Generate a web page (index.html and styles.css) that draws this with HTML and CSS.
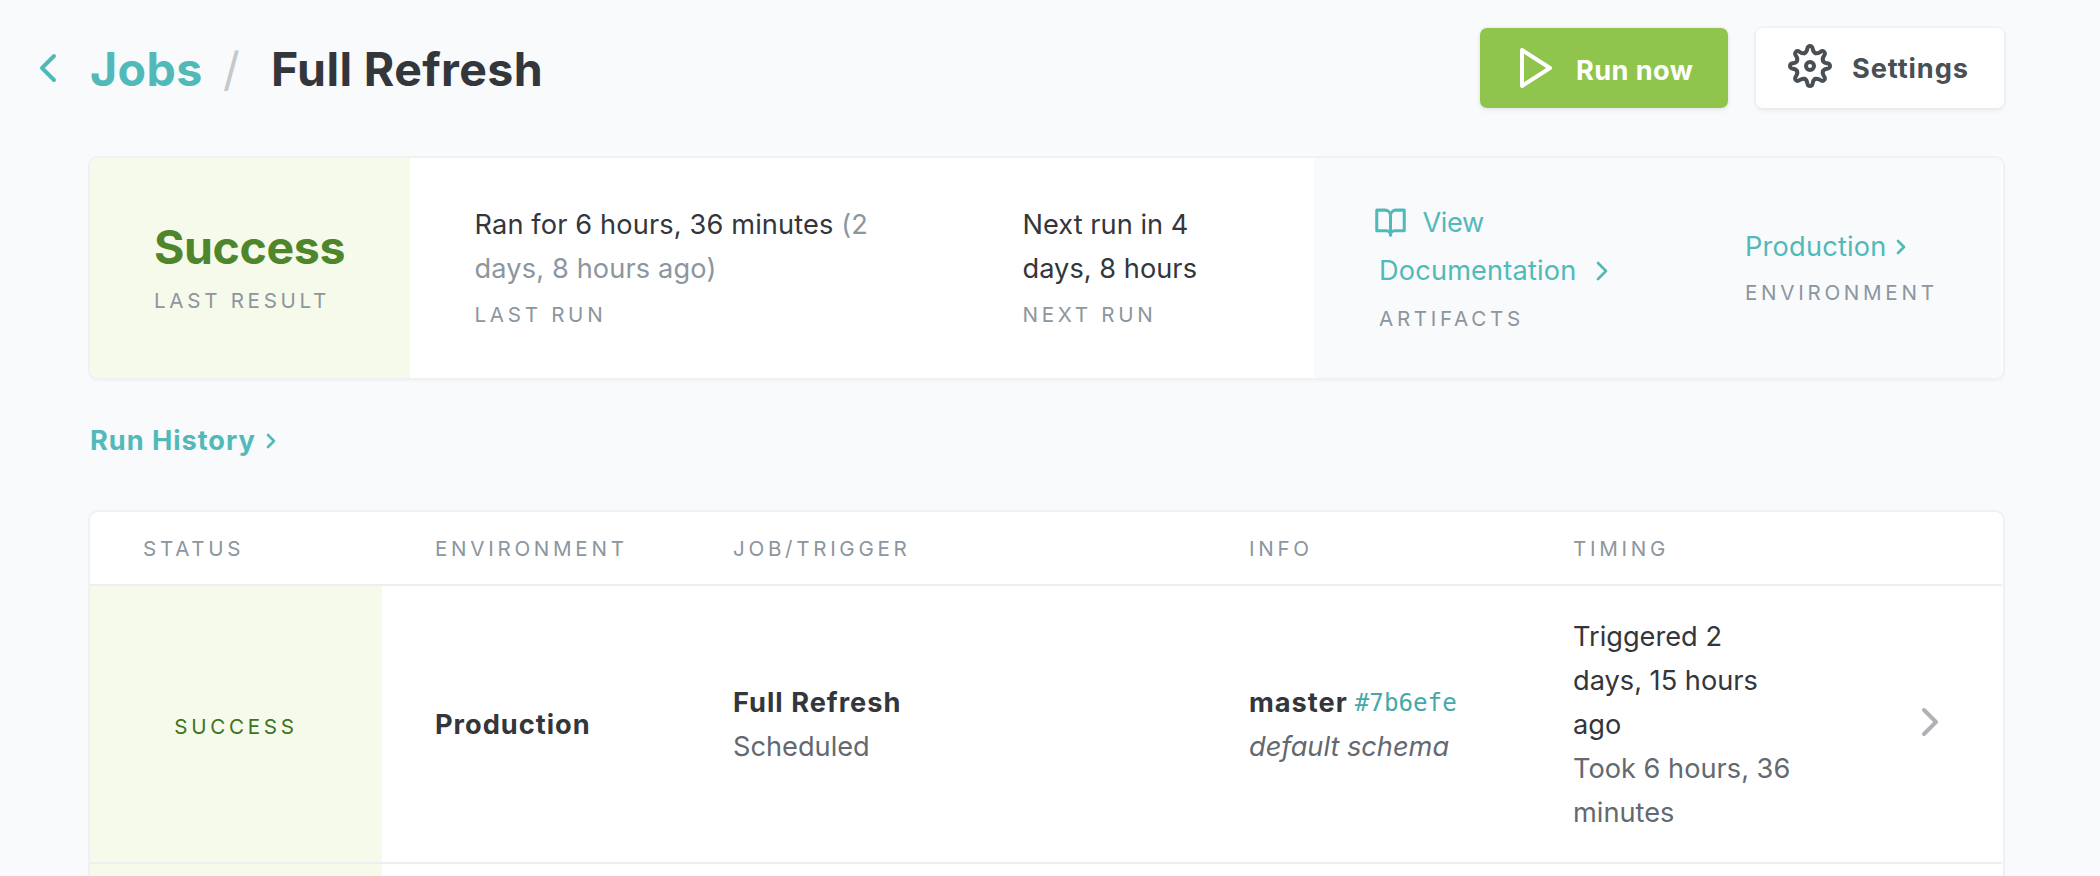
FILE: index.html
```html
<!DOCTYPE html>
<html lang="en">
<head>
<meta charset="utf-8">
<title>Full Refresh</title>
<link rel="stylesheet" href="styles.css">
</head>
<body>
<svg class="defs" width="0" height="0">
  <symbol id="chevron-right" viewBox="0 0 24 24"><polyline points="9 18 15 12 9 6"/></symbol>
  <symbol id="chevron-left" viewBox="0 0 24 24"><polyline points="15 18 9 12 15 6"/></symbol>
  <path id="tooth" d="M-5.36-12.93C-1.2-14.65-4.2-20 0-20S1.2-14.65 5.36-12.93"/>
</svg>

<header class="topbar">
  <a class="back"><svg class="icon icon-lg"><use href="#chevron-left"/></svg></a>
  <h1 class="crumbs"><a class="crumb-link">Jobs</a><span class="slash">/</span><span class="crumb-current">Full Refresh</span></h1>
  <div class="actions">
    <button class="btn btn-run">
      <svg class="icon icon-lg" viewBox="0 0 24 24"><polygon points="5 3 19 12 5 21 5 3"/></svg>
      <span class="run-text">Run now</span>
    </button>
    <button class="btn btn-settings">
      <svg class="icon gear" viewBox="-22 -22 44 44">
        <circle r="4"/>
        <use href="#tooth"/><use href="#tooth" transform="rotate(45)"/><use href="#tooth" transform="rotate(90)"/><use href="#tooth" transform="rotate(135)"/>
        <use href="#tooth" transform="rotate(180)"/><use href="#tooth" transform="rotate(225)"/><use href="#tooth" transform="rotate(270)"/><use href="#tooth" transform="rotate(315)"/>
      </svg>
      <span class="settings-text">Settings</span>
    </button>
  </div>
</header>

<main class="content">
  <section class="card summary">
    <div class="cell cell-result">
      <div class="result">Success</div>
      <div class="label">Last result</div>
    </div>
    <div class="cell cell-last">
      <div class="value">Ran for 6 hours, 36 minutes <span class="muted">(2<br>days, 8 hours ago)</span></div>
      <div class="label">Last run</div>
    </div>
    <div class="cell cell-next">
      <div class="value">Next run in 4<br>days, 8 hours</div>
      <div class="label">Next run</div>
    </div>
    <div class="cell cell-artifacts">
      <a class="doc-line doc-first"><svg class="icon book" viewBox="0 0 24 24"><path d="M2 3h6a4 4 0 0 1 4 4v14a3 3 0 0 0-3-3H2z"/><path d="M22 3h-6a4 4 0 0 0-4 4v14a3 3 0 0 1 3-3h7z"/></svg><span class="view">View</span></a>
      <a class="doc-line"><span class="doc">Documentation</span><svg class="icon icon-md"><use href="#chevron-right"/></svg></a>
      <div class="label">Artifacts</div>
    </div>
    <div class="cell cell-env">
      <a class="env-line"><span class="env">Production</span><svg class="icon icon-sm"><use href="#chevron-right"/></svg></a>
      <div class="label">Environment</div>
    </div>
  </section>

  <h2 class="history"><a class="history-link"><span>Run History</span><svg class="icon icon-sm"><use href="#chevron-right"/></svg></a></h2>

  <section class="card runs">
    <div class="row head">
      <div class="td label">Status</div>
      <div class="td label">Environment</div>
      <div class="td label">Job/Trigger</div>
      <div class="td label">Info</div>
      <div class="td label">Timing</div>
    </div>
    <div class="row run">
      <div class="status label">Success</div>
      <div class="td strong">Production</div>
      <div class="td"><div class="strong">Full Refresh</div><div class="sub">Scheduled</div></div>
      <div class="td"><div class="info-line"><span class="strong">master</span> <a class="hash">#7b6efe</a></div><div class="sub schema">default schema</div></div>
      <div class="td"><div>Triggered 2<br>days, 15 hours<br>ago</div><div class="sub">Took 6 hours, 36<br>minutes</div></div>
      <div class="open"><svg class="icon icon-lg"><use href="#chevron-right"/></svg></div>
    </div>
    <div class="row next-run"><div class="status"></div></div>
  </section>
</main>
</body>
</html>
```
FILE: styles.css
```css
* { box-sizing: border-box; }

body {
  margin: 0;
  height: 876px;
  overflow: hidden;
  background: #f9fafc;
  color: #33363b;
  font: 400 27.2px/44px Inter, sans-serif;
}

.defs { position: absolute; }

.icon {
  display: block;
  flex: none;
  overflow: visible;
  fill: none;
  stroke: currentColor;
  stroke-width: 2;
  stroke-linecap: round;
  stroke-linejoin: round;
}
.icon-lg { width: 48px; height: 48px; }
.icon-md { width: 32px; height: 32px; }
.icon-sm { width: 24px; height: 24px; stroke-width: 2.6; }

.label {
  color: #8c969e;
  font-size: 20.6px;
  letter-spacing: 3.7px;
  text-transform: uppercase;
  white-space: nowrap;
}

/* Top bar */
.topbar {
  display: flex;
  align-items: center;
  height: 136px;
  padding: 0 96px 0 24px;
}
.back { color: #52b9b9; }
.crumbs {
  display: flex;
  align-items: center;
  margin: 2px 0 0 18px;
  font-size: 46.5px;
  font-weight: 700;
  line-height: 56px;
}
.crumb-link { width: 133px; color: #52b9b9; letter-spacing: .4px; }
.slash { width: 48px; color: #c4c9cd; font-weight: 400; }
.crumb-current { letter-spacing: .38px; }
.actions { display: flex; gap: 28px; margin-left: auto; }
.btn {
  display: flex;
  align-items: center;
  width: 248px;
  height: 80px;
  border: 0;
  border-radius: 7px;
  box-shadow: 0 0 0 2px rgba(0, 0, 0, .025), 0 3px 6px rgba(0, 0, 0, .05);
  font: 700 27.2px/44px Inter, sans-serif;
}
.btn-run { padding: 0 0 0 32px; background: #8fc54c; color: #fff; }
.run-text { margin: 5px 0 0 16px; letter-spacing: .4px; }
.btn-settings { padding: 0 0 0 32px; background: #fff; color: #484f55; }
.gear { width: 44px; height: 44px; margin-top: -4px; stroke-width: 4; }
.settings-text { margin: 1px 0 0 20px; letter-spacing: .9px; }

/* Cards */
.content { width: 1913px; margin: 22px 0 0 90px; }
.card {
  border-radius: 8px;
  background: #fff;
  box-shadow: 0 0 0 2px #f0f1f4, 0 2px 4px rgba(0, 0, 0, .06);
  overflow: hidden;
}
.summary { display: flex; height: 220px; }
.cell { flex: none; }
.cell-result { width: 320px; padding: 61px 0 0 64px; background: #f6faeb; }
.result {
  margin-bottom: 4px;
  color: #4f862c;
  font-size: 46.5px;
  font-weight: 700;
  letter-spacing: -.4px;
  line-height: 56px;
}
.cell-last { width: 548px; padding: 45px 0 0 64.5px; }
.cell-last .value { margin-bottom: 2px; letter-spacing: .13px; white-space: nowrap; }
.muted { color: #8c969e; }
.cell-next { width: 356px; padding: 45px 0 0 64.5px; }
.cell-next .value { margin-bottom: 2px; letter-spacing: .03px; }
.cell-artifacts { width: 366px; padding: 41px 0 0 65px; background: #f9fafc; }
.doc-line { display: flex; align-items: center; height: 48px; color: #52b9b9; }
.doc-first { margin-left: -5.5px; }
.book { width: 33px; height: 33px; margin-top: -2px; stroke-width: 2.2; }
.view { margin-left: 16px; letter-spacing: -.4px; }
.doc { width: 207px; letter-spacing: .15px; }
.cell-artifacts .label { margin-top: 2px; }
.cell-env { width: 321px; padding: 67px 0 0 65px; background: #f9fafc; }
.env-line { display: flex; align-items: center; color: #52b9b9; }
.env { width: 144px; letter-spacing: .2px; }
.cell-env .label { margin-top: 2px; }

.history { margin: 41px 0 49px; font-size: 27.2px; font-weight: 700; line-height: 44px; }
.history-link { display: flex; align-items: center; gap: 3px; color: #52b9b9; letter-spacing: .95px; }

/* Runs table */
.row { display: grid; grid-template-columns: 292px 298px 516px 324px 332px 150px; margin-right: 1px; }
.head { height: 74px; border-bottom: 2px solid #edeeef; align-items: center; }
.run { height: 278px; border-bottom: 2px solid #edeeef; align-items: center; }
.next-run { height: 12px; }
.runs { border-radius: 8px 8px 0 0; }
.td { padding: 2px 0 0 53px; white-space: nowrap; }
.status {
  display: flex;
  align-self: stretch;
  align-items: center;
  justify-content: center;
  padding-top: 5px;
  background: #f6faeb;
  color: #3f7323;
}
.strong { font-weight: 700; letter-spacing: 1px; }
.sub { color: #636970; }
.schema { font-style: italic; }
.hash {
  color: #46a9a9;
  font-family: "DejaVu Sans Mono", monospace;
  font-size: 24.2px;
}
.info-line { display: flex; gap: 7px; height: 44px; }
.open { padding: 0 0 4px 54px; color: #afb1b4; }
```
